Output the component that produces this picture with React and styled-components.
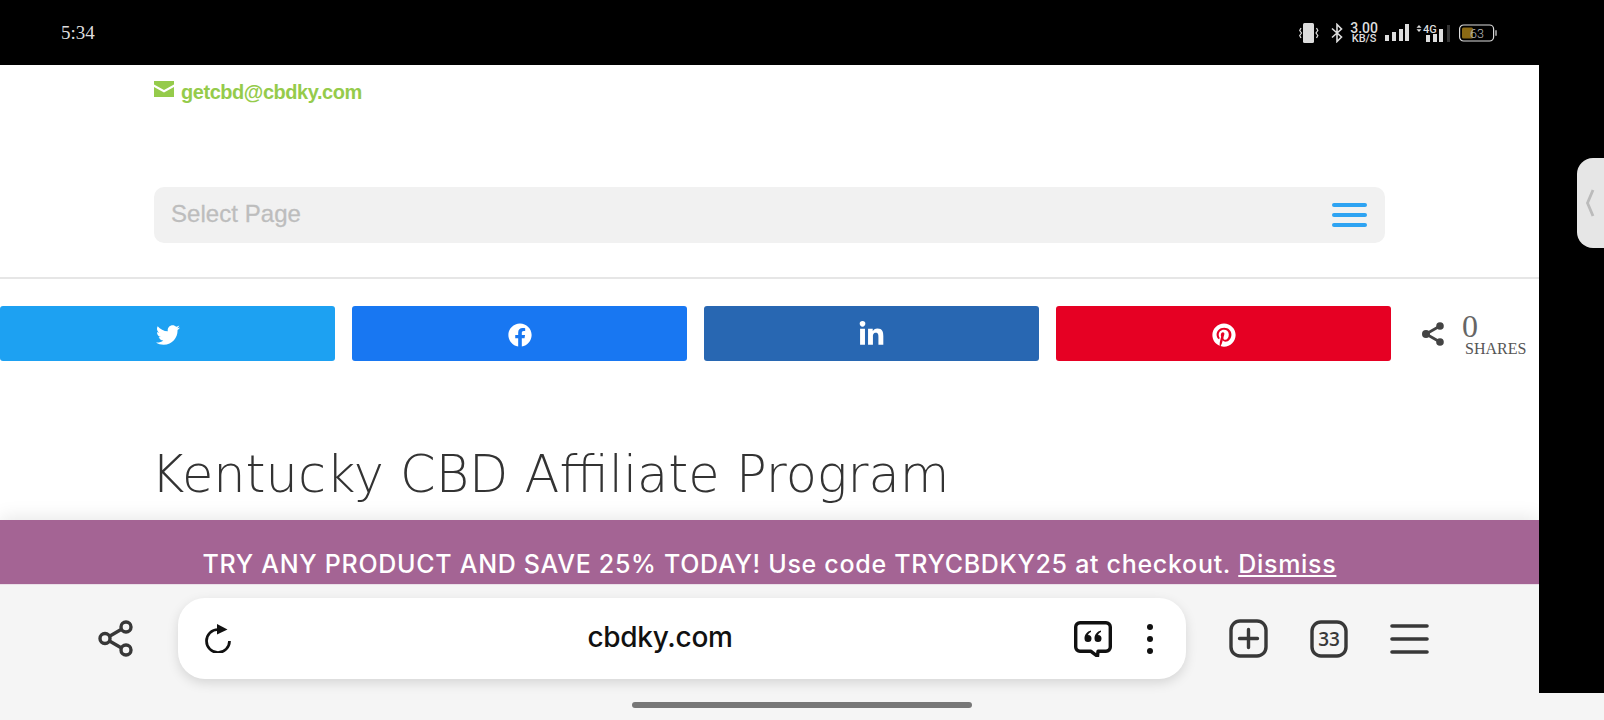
import React from 'react';
import styled, { createGlobalStyle } from 'styled-components';
import { FaTwitter, FaFacebook, FaLinkedinIn, FaPinterest } from 'react-icons/fa';

const Global = createGlobalStyle`
  html, body { margin: 0; padding: 0; background: #000; overflow: hidden; }
  * { box-sizing: border-box; }
`;
const Screen = styled.div`
  width: 1604px; height: 720px; display: flex; flex-direction: column; background: #000; overflow: hidden;
`;
const StatusBar = styled.div`
  height: 65px; flex: none; display: flex; align-items: center; justify-content: space-between;
  padding: 0 107px 0 61px; color: #ddd;
`;
const Clock = styled.span`font: 19px "Liberation Serif", serif; padding-top: 1px;`;
const StatusIcons = styled.div`display: flex; align-items: center; gap: 7px;`;
const Speed = styled.div`
  display: flex; flex-direction: column; align-items: center; color: #ddd;
  font-family: "Roboto", sans-serif; font-weight: 500;
`;
const SpeedValue = styled.span`font-size: 14px; line-height: 11px;`;
const SpeedUnit = styled.span`font-size: 11px; line-height: 9px;`;
const Middle = styled.div`flex: 1; display: flex; min-height: 0;`;
const Page = styled.div`
  width: 1539px; flex: none; background: #fff; display: flex; flex-direction: column; position: relative;
`;
const SideRail = styled.div`flex: 1; display: flex; justify-content: flex-end; padding-top: 93px;`;
const Handle = styled.div`
  width: 27px; height: 90px; background: #e6e6e6; border-radius: 16px 0 0 16px;
  display: flex; align-items: center; padding-left: 8px;
`;
const TopBlock = styled.div`
  padding: 15px 154px 0 154px; height: 214px; border-bottom: 2px solid #e6e6e6; flex: none;
`;
const EmailRow = styled.a`
  display: flex; align-items: center; gap: 7px; height: 24px; color: #95cb4b;
  font: 600 20px "Liberation Sans", sans-serif; letter-spacing: -.45px;
`;
const EnvelopeIcon = styled.svg`margin-bottom: 7px; flex: none;`;
const Menu = styled.div`
  margin-top: 83px; height: 56px; background: #f1f1f1; border-radius: 10px;
  display: flex; align-items: center; justify-content: space-between; padding: 0 18px 0 17px;
`;
const MenuLabel = styled.span`
  font: 24px "Liberation Sans", sans-serif; color: #bdbdbd; letter-spacing: .05px; -webkit-text-stroke: .3px #bdbdbd;
  padding-bottom: 2px;
`;
const Burger = styled.div`display: flex; flex-direction: column; gap: 6px; width: 35px;`;
const BurgerLine = styled.span`height: 4px; border-radius: 2px; background: #2ea3f2;`;
const ShareRow = styled.div`margin-top: 27px; display: flex; gap: 17px; align-items: center; flex: none;`;
const ShareButton = styled.div`
  width: 335px; height: 55px; flex: none; background: ${p => p.$bg}; border-radius: 3px; color: #fff;
  display: flex; align-items: center; justify-content: center; font-size: ${p => p.$icon || 24}px; padding-top: 2px;
`;
const ShareCount = styled.div`display: flex; align-items: center; margin-left: 14px;`;
const CountText = styled.div`
  margin-left: 18px; display: flex; flex-direction: column; align-items: flex-start;
  font-family: "Liberation Serif", serif; font-weight: 400; color: #555;
`;
const CountNumber = styled.span`font-size: 32px; line-height: 30px; color: #666;`;
const CountLabel = styled.span`font-size: 16px; line-height: 16px; margin-left: 3px;`;
const Title = styled.h1`
  margin: 83px 0 0 151px; font: 200 51px/62px "DejaVu Sans", sans-serif; color: #333;
`;
const Banner = styled.div`
  position: absolute; left: 0; right: 0; top: 455px; height: 64px; background: #a46494; color: #fff;
  display: flex; align-items: flex-start; justify-content: center; padding-top: 28px;
  font: 500 25px/32px "Inter", sans-serif; letter-spacing: .7px; white-space: pre;
  box-shadow: 0 -2px 18px rgba(0,0,0,.1);
`;
const Dismiss = styled.span`text-decoration: underline;`;
const Browser = styled.div`
  position: absolute; left: 0; right: 0; bottom: 0; height: 109px; background: #f5f5f5;
  border-top: 1px solid #eadfe8;
  display: flex; align-items: center; padding: 13px 0 14px 98px;
`;
const UrlBar = styled.div`
  margin-left: 45px; width: 1008px; height: 81px; flex: none; background: #fff; border-radius: 27px;
  box-shadow: 0 4px 12px rgba(0,0,0,.13); display: flex; align-items: center; padding: 0 33px 0 27px;
`;
const Url = styled.span`
  flex: 1; text-align: center; font: 500 28px "Inter", sans-serif; color: #111; letter-spacing: -.3px;
  padding: 0 0 3px 15px;
`;
const UrlActions = styled.div`display: flex; align-items: center; gap: 35px;`;
const Tools = styled.div`display: flex; align-items: center; gap: 42px; margin-left: 43px;`;
const HomeStrip = styled.div`
  height: 27px; flex: none; background: #f5f5f5; display: flex; justify-content: center; padding-top: 9px;
`;
const HomeBar = styled.div`width: 340px; height: 6px; border-radius: 3px; background: #777;`;
const Tabs = styled.text`font: 600 19px "Open Sans", sans-serif;`;

const Envelope = () => (
  <EnvelopeIcon width="20" height="16" viewBox="0 0 20 16" fill="#95cb4b">
    <path d="M0 0h20v3.500L10 9 0 3.500z" />
    <path d="M0 6l10 5.500L20 6v10H0z" />
  </EnvelopeIcon>
);
const Vibrate = () => (
  <svg width="25" height="20" viewBox="0 0 25 20" fill="none">
    <rect x="4" y="0" width="11" height="20" rx="1.500" fill="#ddd" />
    <path d="M2 5 .7 7.500 2.500 10 .7 12.500 2 15M17.500 5l1.300 2.500L17 10l1.800 2.500L17.500 15" stroke="#ddd" strokeWidth="1.200" />
  </svg>
);
const Bluetooth = () => (
  <svg width="12" height="20" viewBox="0 0 12 20" fill="none">
    <path d="M1 5.500 10.500 14 6 18.500v-17L10.500 6 1 14.500" stroke="#ddd" strokeWidth="1.600" />
  </svg>
);
const Signal = () => (
  <svg width="24" height="18" viewBox="0 0 24 18" fill="#ddd">
    <rect x="0" y="11" width="4" height="6" /><rect x="7" y="8" width="4" height="9" />
    <rect x="14" y="5" width="4" height="12" /><rect x="20" y="0" width="4" height="17" />
  </svg>
);
const Signal4G = () => (
  <svg width="34" height="18" viewBox="0 0 34 18">
    <path d="M3 1 5.500 3.800H.5zM3 8 .5 5.200h5z" fill="#ddd" />
    <text x="7" y="9" fill="#ddd" fontFamily="Roboto" fontWeight="500" fontSize="11">4G</text>
    <rect x="10" y="11" width="4" height="7" fill="#ddd" /><rect x="17" y="10" width="4" height="8" fill="#ddd" />
    <rect x="23" y="5" width="4" height="13" fill="#ddd" /><rect x="31" y="1" width="3" height="17" fill="#333" />
  </svg>
);
const Battery = () => (
  <svg width="40" height="18" viewBox="0 0 40 18" fill="none">
    <rect x="2.600" y="1" width="34" height="16" rx="4" stroke="#ddd" strokeWidth="1.200" />
    <rect x="5" y="3.500" width="11" height="11" rx="1.500" fill="#8a6914" />
    <rect x="38" y="6" width="2" height="6" rx="1" fill="#888" />
    <text x="13" y="13.500" fill="#bbb" fontFamily="Roboto" fontWeight="300" fontSize="12.500">63</text>
  </svg>
);
const ShareGlyph = () => (
  <svg width="22" height="24" viewBox="0 0 22 24" fill="#444">
    <circle cx="18" cy="4" r="3.800" /><circle cx="18" cy="20" r="3.800" /><circle cx="4" cy="12" r="4" />
    <path d="M4 12 18 4M4 12l14 8" stroke="#444" strokeWidth="2.600" />
  </svg>
);
const BrowserShare = () => (
  <svg width="35" height="37" viewBox="0 0 35 37" fill="none" stroke="#383838" strokeWidth="3.400">
    <circle cx="28" cy="7" r="5" /><circle cx="28" cy="30" r="5" /><circle cx="7" cy="18.500" r="5" />
    <path d="m11.500 16.200 12-7M11.500 21l12 7" />
  </svg>
);
const Reload = () => (
  <svg width="26" height="29" viewBox="0 0 26 29" fill="none">
    <path d="M13 5.500A11.500 11.500 0 1 0 24.500 17" stroke="#111" strokeWidth="2.700" />
    <path d="M12 0l10.500 5.500L12 10.500z" fill="#111" />
  </svg>
);
const Quote = () => (
  <svg width="38" height="36" viewBox="0 0 38 36" fill="none">
    <path d="M6 1.700h26a4.300 4.300 0 0 1 4.300 4.300v20a4.300 4.300 0 0 1-4.300 4.300H24l-.5 5-6.500-5H6A4.300 4.300 0 0 1 1.700 26V6A4.300 4.300 0 0 1 6 1.700z" stroke="#111" strokeWidth="3.400" strokeLinejoin="round" />
    <path d="M17 9.500c-4 1-6.500 4-6.500 8a3.500 3.500 0 1 0 3.500-3.500c.5-1.500 1.500-2.500 3-3zM27 9.500c-4 1-6.500 4-6.500 8a3.500 3.500 0 1 0 3.500-3.500c.5-1.500 1.500-2.500 3-3z" fill="#111" />
  </svg>
);
const Dots = () => (
  <svg width="6" height="30" viewBox="0 0 6 30" fill="#111">
    <circle cx="3" cy="3" r="3" /><circle cx="3" cy="15" r="3" /><circle cx="3" cy="27" r="3" />
  </svg>
);
const PlusBox = () => (
  <svg width="39" height="39" viewBox="0 0 39 39" fill="none" stroke="#383838" strokeWidth="3.400" strokeLinecap="round">
    <rect x="2" y="2" width="35" height="35" rx="9" /><path d="M19.500 10.500v18M10.500 19.500h18" />
  </svg>
);
const TabBox = () => (
  <svg width="38" height="38" viewBox="0 0 38 38" fill="none">
    <rect x="2" y="2" width="34" height="34" rx="9" stroke="#383838" strokeWidth="3.400" />
    <Tabs x="19" y="26" fill="#383838" textAnchor="middle">33</Tabs>
  </svg>
);
const BrowserMenu = () => (
  <svg width="39" height="30" viewBox="0 0 39 30" stroke="#383838" strokeWidth="3.600" strokeLinecap="round">
    <path d="M2 2h35M2 15h35M2 28h35" />
  </svg>
);
const Chevron = () => (
  <svg width="10" height="28" viewBox="0 0 10 28" fill="none">
    <path d="M8 1 2.500 14 8 27" stroke="#bbb" strokeWidth="2.800" />
  </svg>
);

export default function App() {
  return (
    <Screen>
      <Global />
      <StatusBar>
        <Clock>5:34</Clock>
        <StatusIcons>
          <Vibrate />
          <Bluetooth />
          <Speed><SpeedValue>3.00</SpeedValue><SpeedUnit>KB/S</SpeedUnit></Speed>
          <Signal />
          <Signal4G />
          <Battery />
        </StatusIcons>
      </StatusBar>
      <Middle>
        <Page>
          <TopBlock>
            <EmailRow><Envelope />getcbd@cbdky.com</EmailRow>
            <Menu>
              <MenuLabel>Select Page</MenuLabel>
              <Burger><BurgerLine /><BurgerLine /><BurgerLine /></Burger>
            </Menu>
          </TopBlock>
          <ShareRow>
            <ShareButton $bg="#1da1f2"><FaTwitter /></ShareButton>
            <ShareButton $bg="#1877f2"><FaFacebook /></ShareButton>
            <ShareButton $bg="#2867b2" $icon={27}><FaLinkedinIn /></ShareButton>
            <ShareButton $bg="#e60023"><FaPinterest /></ShareButton>
            <ShareCount>
              <ShareGlyph />
              <CountText><CountNumber>0</CountNumber><CountLabel>SHARES</CountLabel></CountText>
            </ShareCount>
          </ShareRow>
          <Title>Kentucky CBD Affiliate Program</Title>
          <Banner>TRY ANY PRODUCT AND SAVE 25% TODAY! Use code TRYCBDKY25 at checkout. <Dismiss>Dismiss</Dismiss></Banner>
          <Browser>
            <BrowserShare />
            <UrlBar>
              <Reload />
              <Url>cbdky.com</Url>
              <UrlActions><Quote /><Dots /></UrlActions>
            </UrlBar>
            <Tools>
              <PlusBox />
              <TabBox />
              <BrowserMenu />
            </Tools>
          </Browser>
        </Page>
        <SideRail><Handle><Chevron /></Handle></SideRail>
      </Middle>
      <HomeStrip><HomeBar /></HomeStrip>
    </Screen>
  );
}
